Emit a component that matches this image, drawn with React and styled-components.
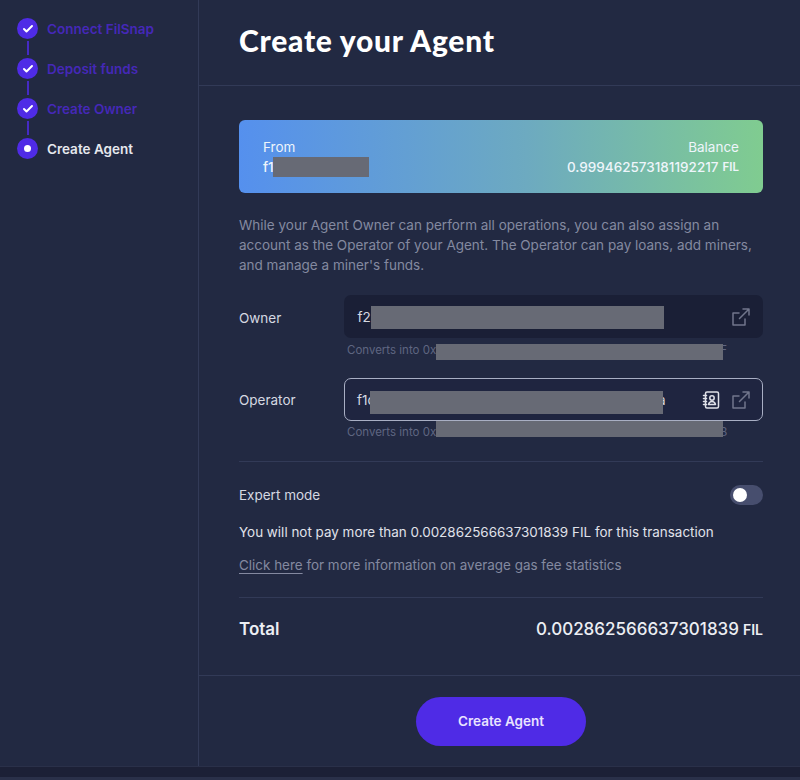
import React from "react";
import styled, { createGlobalStyle } from "styled-components";
import { Check } from "lucide-react";

const colors = {
    page: "#222942",
    line: "#323a57",
    purple: "#4f2be6",
    stepDone: "#4528b8",
    soft: "#8489a0",
    text: "#e6e8ee",
    field: "#1a1f36",
    redact: "#676a75",
};

const GlobalStyle = createGlobalStyle`
    html, body {
        margin: 0;
        padding: 0;
        background: ${colors.page};
    }

    body {
        font-family: Inter, "Liberation Sans", sans-serif;
        color: ${colors.text};
    }
`;

const Page = styled.div`
    width: 800px;
    height: 780px;
    overflow: hidden;
    display: flex;
    flex-direction: column;
    background: #1c2036;
`;

const Frame = styled.div`
    height: 767px;
    flex: none;
    display: flex;
    background: ${colors.page};
    border-bottom: 1px solid #2a3049;
    box-sizing: border-box;
`;

const BottomStrip = styled.div`
    flex: 1;
    box-sizing: border-box;
    border-bottom: 3px solid #2a3049;
`;

const Sidebar = styled.aside`
    width: 199px;
    flex: none;
    box-sizing: border-box;
    border-right: 1px solid ${colors.line};
    padding: 18px 0 0 17px;
`;

const Step = styled.div`
    display: flex;
    align-items: center;
    gap: 9px;
    height: 21px;
    font-size: 13.5px;
    font-weight: 600;
    color: ${(p) => (p.$active ? colors.text : colors.stepDone)};
`;

const StepDot = styled.span`
    width: 21px;
    height: 21px;
    flex: none;
    border-radius: 50%;
    background: ${colors.purple};
    display: flex;
    align-items: center;
    justify-content: center;
    color: #fff;
`;

const StepCore = styled.span`
    width: 7px;
    height: 7px;
    border-radius: 50%;
    background: #fff;
`;

const StepLine = styled.div`
    width: 2px;
    height: 14px;
    margin: 2px 0 3px 10px;
    background: ${colors.purple};
    opacity: 0.8;
`;

const Main = styled.main`
    flex: 1;
    min-width: 0;
    display: flex;
    flex-direction: column;
`;

const Header = styled.header`
    height: 86px;
    flex: none;
    box-sizing: border-box;
    border-bottom: 1px solid ${colors.line};
    padding: 0 37px 5px 40px;
    display: flex;
    align-items: center;
`;

const Title = styled.h1`
    margin: 0;
    font-family: Lato, Inter, sans-serif;
    font-size: 30px;
    font-weight: 900;
    letter-spacing: 0.75px;
    color: #fff;
`;

const Content = styled.div`
    flex: 1;
    padding: 34px 37px 0 40px;
`;

const BalanceCard = styled.div`
    height: 73px;
    box-sizing: border-box;
    border-radius: 6px;
    background: linear-gradient(90deg, #5590ee 0%, #6daac0 55%, #80cc90 100%);
    padding: 0 24px;
    display: flex;
    align-items: center;
    justify-content: space-between;
    font-size: 13.5px;
    line-height: 20px;
    color: #eef5fb;
`;

const CardSide = styled.div`
    text-align: ${(p) => (p.$right ? "right" : "left")};
`;

const CardValue = styled.div`
    font-weight: 500;
    display: flex;
    align-items: center;
    justify-content: ${(p) => (p.$right ? "flex-end" : "flex-start")};
`;

const Unit = styled.span`
    font-size: ${(p) => p.$size || 11.5}px;
    font-weight: 600;
    margin-left: 4px;
`;

const Prefix = styled.span`
    display: inline-block;
    flex: none;
    width: ${(p) => p.$w}px;
    white-space: nowrap;
`;

const Redacted = styled.span`
    position: relative;
    display: inline-block;
    flex: none;
    width: ${(p) => p.$w}px;
    height: ${(p) => p.$h}px;
    margin-top: ${(p) => p.$shift || 0}px;
    background: ${colors.redact};
`;

const Leftover = styled.span`
    flex: none;
    margin-left: ${(p) => p.$back}px;
    line-height: ${(p) => p.$line || 20}px;
`;

const Note = styled.p`
    margin: 22px 0 0;
    font-size: 13.5px;
    line-height: 20px;
    color: ${colors.soft};
`;

const FieldRow = styled.div`
    display: flex;
    align-items: center;
    margin-top: ${(p) => p.$top}px;
`;

const FieldLabel = styled.span`
    width: 105px;
    flex: none;
    font-size: 13.5px;
    padding-top: ${(p) => p.$drop || 0}px;
    color: #d5d8e1;
`;

const Field = styled.div`
    flex: 1;
    height: 43px;
    box-sizing: border-box;
    border-radius: 7px;
    padding: 0 ${(p) => (p.$outlined ? 12 : 13.5)}px;
    display: flex;
    align-items: center;
    font-size: 13.5px;
    color: #d5d8e1;
    background: ${(p) => (p.$outlined ? "#1f2540" : colors.field)};
    border: ${(p) => (p.$outlined ? "1.5px solid #a9afc4" : "none")};
`;

const FieldText = styled.span`
    flex: 1;
    display: flex;
    align-items: center;
`;

const FieldIcon = styled.svg`
    width: 18px;
    height: 18px;
    flex: none;
    margin-left: ${(p) => p.$gap || 11}px;
    fill: none;
    stroke: ${(p) => p.$color || "#71768c"};
    stroke-width: 1.5;
    stroke-linecap: round;
    stroke-linejoin: round;
`;

const Converts = styled.div`
    margin: ${(p) => p.$top}px 0 0 108px;
    height: 16px;
    display: flex;
    align-items: flex-start;
    font-size: 11.5px;
    color: #5f6681;
`;

const ConvertsText = styled.span`
    line-height: ${(p) => p.$line}px;
`;

const Divider = styled.div`
    height: 1px;
    background: ${colors.line};
    margin-top: ${(p) => p.$top}px;
`;

const ToggleRow = styled.div`
    display: flex;
    align-items: center;
    justify-content: space-between;
    margin-top: 23px;
    height: 20px;
    font-size: 13.5px;
    color: #d5d8e1;
`;

const Toggle = styled.span`
    width: 33px;
    height: 20px;
    border-radius: 10px;
    background: #474e6e;
    display: flex;
    align-items: center;
    padding-left: 3px;
    box-sizing: border-box;
`;

const Knob = styled.span`
    width: 14px;
    height: 14px;
    border-radius: 50%;
    background: #fff;
`;

const FeeLine = styled.p`
    margin: 17px 0 0;
    font-size: 13.45px;
    line-height: 20px;
    color: #e0e2ea;
`;

const GasLine = styled.p`
    margin: 13px 0 0;
    font-size: 13.45px;
    line-height: 20px;
    color: ${colors.soft};

    a {
        color: ${colors.soft};
        text-decoration: underline;
        text-underline-offset: 3px;
    }
`;

const TotalRow = styled.div`
    display: flex;
    align-items: center;
    justify-content: space-between;
    margin-top: 20px;
    height: 22px;
    color: #eceef3;
`;

const TotalLabel = styled.span`
    font-size: 17px;
    font-weight: 600;
`;

const TotalValue = styled.span`
    font-size: 17px;
    font-weight: 500;
    display: flex;
    align-items: baseline;
`;

const Footer = styled.footer`
    height: 91px;
    flex: none;
    box-sizing: border-box;
    border-top: 1px solid ${colors.line};
    padding: 1px 0 0 3px;
    display: flex;
    align-items: center;
    justify-content: center;
`;

const PrimaryButton = styled.button`
    width: 170px;
    height: 49px;
    border: none;
    border-radius: 25px;
    padding: 0 0 2px;
    background: ${colors.purple};
    color: #e9e3ff;
    font-family: inherit;
    font-size: 13.5px;
    font-weight: 600;
    cursor: pointer;
`;

const ExternalIcon = ({ gap }) => (
    <FieldIcon viewBox="0 0 18 18" $gap={gap}>
        <path d="M7 5H1v12h12v-6" />
        <path d="M7.500 10.500L17 1M11 1h6v6" />
    </FieldIcon>
);

const ContactsIcon = () => (
    <FieldIcon viewBox="0 0 18 18" $color="#dfe1e8">
        <rect x="3.500" y="1" width="13" height="16" rx="1.500" />
        <circle cx="10" cy="7" r="2.200" />
        <path d="M6.500 13.500c.5-2 1.800-3 3.500-3s3 1 3.500 3z" />
        <path d="M1.500 4.500h3M1.500 7.500h3M1.500 10.500h3M1.500 13.500h3" />
    </FieldIcon>
);

const steps = [
    { label: "Connect FilSnap" },
    { label: "Deposit funds" },
    { label: "Create Owner" },
    { label: "Create Agent", active: true },
];

const App = () => {
    return (
        <Page>
            <GlobalStyle />
            <Frame>
                <Sidebar>
                    {steps.map((step, i) => (
                        <React.Fragment key={step.label}>
                            {i > 0 && <StepLine />}
                            <Step $active={step.active}>
                                <StepDot>
                                    {step.active ? <StepCore /> : <Check size={12} strokeWidth={4} />}
                                </StepDot>
                                {step.label}
                            </Step>
                        </React.Fragment>
                    ))}
                </Sidebar>
                <Main>
                    <Header>
                        <Title>Create your Agent</Title>
                    </Header>
                    <Content>
                        <BalanceCard>
                            <CardSide>
                                <div>From</div>
                                <CardValue>
                                    <Prefix $w={10}>f1</Prefix>
                                    <Redacted $w={96} $h={20} />
                                </CardValue>
                            </CardSide>
                            <CardSide $right>
                                <div>Balance</div>
                                <CardValue $right>
                                    0.999462573181192217
                                    <Unit>FIL</Unit>
                                </CardValue>
                            </CardSide>
                        </BalanceCard>
                        <Note>
                            While your Agent Owner can perform all operations, you can also assign an
                            account as the Operator of your Agent. The Operator can pay loans, add
                            miners, and manage a miner's funds.
                        </Note>
                        <FieldRow $top={20}>
                            <FieldLabel $drop={2}>Owner</FieldLabel>
                            <Field>
                                <FieldText>
                                    <Prefix $w={13}>f2</Prefix>
                                    <Redacted $w={293} $h={23} $shift={2} />
                                </FieldText>
                                <ExternalIcon />
                            </Field>
                        </FieldRow>
                        <Converts $top={6}>
                            <ConvertsText $line={12}>Converts into 0x</ConvertsText>
                            <Redacted $w={287} $h={16} />
                            <Leftover $back={-3} $line={12}>F</Leftover>
                        </Converts>
                        <FieldRow $top={18}>
                            <FieldLabel>Operator</FieldLabel>
                            <Field $outlined>
                                <FieldText>
                                    <Prefix $w={13}>f1c</Prefix>
                                    <Redacted $w={293} $h={23} $shift={5} />
                                    <Leftover $back={-5}>a</Leftover>
                                </FieldText>
                                <ContactsIcon />
                                <ExternalIcon gap={12} />
                            </Field>
                        </FieldRow>
                        <Converts $top={0}>
                            <ConvertsText $line={22}>Converts into 0x</ConvertsText>
                            <Redacted $w={287} $h={16} />
                            <Leftover $back={-3} $line={22}>8</Leftover>
                        </Converts>
                        <Divider $top={24} />
                        <ToggleRow>
                            Expert mode
                            <Toggle>
                                <Knob />
                            </Toggle>
                        </ToggleRow>
                        <FeeLine>You will not pay more than 0.002862566637301839 FIL for this transaction</FeeLine>
                        <GasLine>
                            <a href="#gas">Click here</a> for more information on average gas fee statistics
                        </GasLine>
                        <Divider $top={22} />
                        <TotalRow>
                            <TotalLabel>Total</TotalLabel>
                            <TotalValue>
                                0.002862566637301839
                                <Unit $size={14}>FIL</Unit>
                            </TotalValue>
                        </TotalRow>
                    </Content>
                    <Footer>
                        <PrimaryButton>Create Agent</PrimaryButton>
                    </Footer>
                </Main>
            </Frame>
            <BottomStrip />
        </Page>
    );
};

export default App;
